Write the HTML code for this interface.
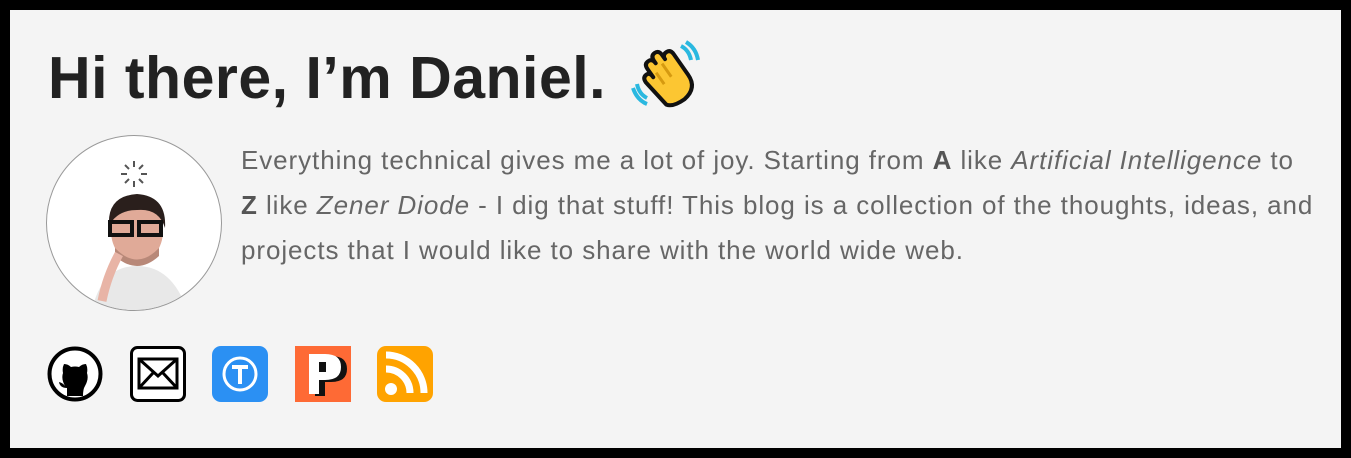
<!DOCTYPE html>
<html><head><meta charset="utf-8"><style>
html,body{margin:0;padding:0;background:#000;}
.page{position:absolute;left:10px;top:10px;width:1331px;height:438px;background:#f4f4f4;}
h1{position:absolute;left:38px;top:30px;margin:0;font:bold 59px/70px "Liberation Sans",sans-serif;color:#222;letter-spacing:0.5px;white-space:nowrap;}
.av{position:absolute;left:36px;top:125px;width:174px;height:174px;border-radius:50%;background:#fff;border:1px solid #999;overflow:hidden;}
.txt{position:absolute;left:231px;top:128px;width:1100px;font:26px/45px "Liberation Sans",sans-serif;color:#666;white-space:nowrap;letter-spacing:0.92px;}
.txt b{color:#555}
.ic{position:absolute;top:336px;width:56px;height:56px;}
</style></head><body><div class="page">
<h1>Hi there, I’m Daniel. <svg width="70" height="70" viewBox="0 0 70 70" style="vertical-align:-12px;margin-left:8px"><g transform="rotate(-35 35 38)"><path d="M20 60 L16 30 Q16 24 21 24 Q25 24 25 30 L25 20 Q25 14 30 14 Q35 14 35 20 L35 17 Q35 11 40 11 Q45 11 45 17 L45 22 Q45 17 50 17 Q55 17 55 23 L55 48 Q55 64 38 66 Q24 66 20 60Z" fill="#fcc632" stroke="#111" stroke-width="4" stroke-linejoin="round"/><path d="M30 28v14M40 24v16" stroke="#d69a10" stroke-width="3"/></g><path d="M50 6 q8 4 10 14 M55 2 q10 6 12 18 M6 44 q2 10 10 14 M2 48 q4 12 14 16" stroke="#2ab8e0" stroke-width="4" fill="none"/></svg></h1>
<div class="av"><svg width="174" height="174" viewBox="0 0 174 174">
<g stroke="#555" stroke-width="2"><path d="M87 25v6M87 45v6M74 38h6M94 38h6M78 29l4 4M92 43l4 4M78 47l4-4M92 33l4-4"/></g>
<path d="M45 174 Q55 130 90 130 Q125 130 140 174Z" fill="#e8e8e8"/>
<ellipse cx="90" cy="95" rx="26" ry="32" fill="#e0aa98"/>
<path d="M62 90 Q60 60 90 58 Q120 60 118 92 Q112 72 90 74 Q70 74 62 90Z" fill="#2a1f1c"/>
<path d="M68 112 Q90 135 112 112 L112 120 Q90 140 68 120Z" fill="#b88878"/>
<rect x="63" y="86" width="22" height="13" fill="none" stroke="#111" stroke-width="4"/><rect x="92" y="86" width="22" height="13" fill="none" stroke="#111" stroke-width="4"/>
<path d="M72 118 Q60 140 55 165" stroke="#e8b4a6" stroke-width="9" fill="none"/>
</svg></div>
<div class="txt">Everything technical gives me a lot of joy. Starting from <b>A</b> like <i>Artificial Intelligence</i> to<br><b>Z</b> like <i>Zener Diode</i> - I dig that stuff! This blog is a collection of the thoughts, ideas, and<br>projects that I would like to share with the world wide web.</div>
<svg class="ic" style="left:37px" viewBox="0 0 56 56"><circle cx="28" cy="28" r="25.5" fill="#fff" stroke="#000" stroke-width="4"/><path d="M20 50 L20 42 Q13 42 12 36 Q16 37 18 40 Q14 33 16 27 Q15 22 17 18 Q21 18 24 21 Q28 20 32 21 Q35 18 39 18 Q41 22 40 27 Q42 33 38 40 Q36 43 36 50Z" fill="#000"/></svg>
<svg class="ic" style="left:120px" viewBox="0 0 56 56"><rect x="1.5" y="1.5" width="53" height="53" rx="6" fill="#fff" stroke="#000" stroke-width="3"/><rect x="9" y="13" width="38" height="29" fill="none" stroke="#000" stroke-width="3"/><path d="M9 13 L28 30 L47 13 M9 42 L23 27 M47 42 L33 27" stroke="#000" stroke-width="3" fill="none"/></svg>
<svg class="ic" style="left:202px" viewBox="0 0 56 56"><rect width="56" height="56" rx="9" fill="#2b90f3"/><circle cx="28" cy="28" r="16" fill="none" stroke="#fff" stroke-width="3"/><path d="M20 21h16M28 21v17" stroke="#fff" stroke-width="4"/></svg>
<svg class="ic" style="left:285px" viewBox="0 0 56 56"><rect width="56" height="56" fill="#fe6a35"/><path d="M20 10h16q16 0 16 13t-16 13h-6v14h-10z" fill="#111"/><path d="M14 8h16q16 0 16 13t-16 13h-6v14h-10z" fill="#fff"/><rect x="24" y="16" width="7" height="10" fill="#111"/></svg>
<svg class="ic" style="left:367px" viewBox="0 0 56 56"><rect width="56" height="56" rx="9" fill="#ffa300"/><circle cx="14" cy="43" r="6" fill="#fff"/><path d="M9 23a24 24 0 0 1 24 24M9 9a38 38 0 0 1 38 38" stroke="#fff" stroke-width="7" fill="none"/></svg>
</div></body></html>
